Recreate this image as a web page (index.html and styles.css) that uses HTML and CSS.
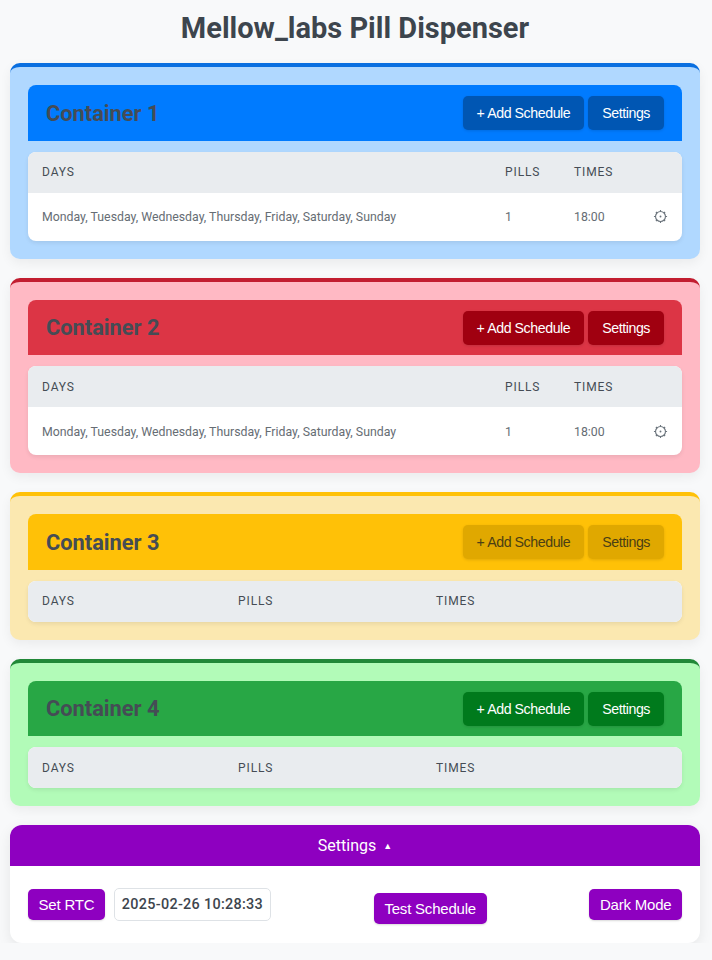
FILE: index.html
```html
<!DOCTYPE html>
<html lang="en">
<head>
<meta charset="utf-8">
<title>Mellow_labs Pill Dispenser</title>
<link rel="stylesheet" href="styles.css">
</head>
<body>
<h1 class="title">Mellow_labs Pill Dispenser</h1>

<section class="container c-blue">
  <div class="head">
    <h2 class="head-title">Container 1</h2>
    <div class="head-actions"><button class="btn">+ Add Schedule</button><button class="btn">Settings</button></div>
  </div>
  <table class="sched">
    <colgroup><col class="w-463"><col class="w-69"><col class="w-74"><col class="w-48"></colgroup>
    <thead><tr><th>Days</th><th>Pills</th><th>Times</th><th></th></tr></thead>
    <tbody><tr><td>Monday, Tuesday, Wednesday, Thursday, Friday, Saturday, Sunday</td><td>1</td><td>18:00</td><td class="act"><svg class="gear" viewBox="0 0 16 16"><circle cx="8" cy="8" r="5.3"/><circle class="dot" cx="8" cy="8" r="1"/><path d="M8 1v1.7M8 13.3V15M1 8h1.7M13.3 8H15M3.05 3.05l1.2 1.2M11.75 11.75l1.2 1.2M3.05 12.95l1.2-1.2M11.75 4.25l1.2-1.2"/></svg></td></tr></tbody>
  </table>
</section>

<section class="container c-red">
  <div class="head">
    <h2 class="head-title">Container 2</h2>
    <div class="head-actions"><button class="btn">+ Add Schedule</button><button class="btn">Settings</button></div>
  </div>
  <table class="sched">
    <colgroup><col class="w-463"><col class="w-69"><col class="w-74"><col class="w-48"></colgroup>
    <thead><tr><th>Days</th><th>Pills</th><th>Times</th><th></th></tr></thead>
    <tbody><tr><td>Monday, Tuesday, Wednesday, Thursday, Friday, Saturday, Sunday</td><td>1</td><td>18:00</td><td class="act"><svg class="gear" viewBox="0 0 16 16"><circle cx="8" cy="8" r="5.3"/><circle class="dot" cx="8" cy="8" r="1"/><path d="M8 1v1.7M8 13.3V15M1 8h1.7M13.3 8H15M3.05 3.05l1.2 1.2M11.75 11.75l1.2 1.2M3.05 12.95l1.2-1.2M11.75 4.25l1.2-1.2"/></svg></td></tr></tbody>
  </table>
</section>

<section class="container c-yellow">
  <div class="head">
    <h2 class="head-title">Container 3</h2>
    <div class="head-actions"><button class="btn">+ Add Schedule</button><button class="btn">Settings</button></div>
  </div>
  <table class="sched">
    <colgroup><col class="w-196"><col class="w-198"><col class="w-130"><col class="w-130"></colgroup>
    <thead><tr><th>Days</th><th>Pills</th><th>Times</th><th></th></tr></thead>
  </table>
</section>

<section class="container c-green">
  <div class="head">
    <h2 class="head-title">Container 4</h2>
    <div class="head-actions"><button class="btn">+ Add Schedule</button><button class="btn">Settings</button></div>
  </div>
  <table class="sched">
    <colgroup><col class="w-196"><col class="w-198"><col class="w-130"><col class="w-130"></colgroup>
    <thead><tr><th>Days</th><th>Pills</th><th>Times</th><th></th></tr></thead>
  </table>
</section>

<section class="settings">
  <div class="settings-head">Settings <span class="caret">▲</span></div>
  <div class="settings-body">
    <div class="rtc"><button class="pbtn">Set RTC</button><span class="clock">2025-02-26 10:28:33</span></div>
    <button class="pbtn test">Test Schedule</button>
    <button class="pbtn dark">Dark Mode</button>
  </div>
</section>
</body>
</html>
```

FILE: styles.css
```css
* { box-sizing: border-box; }
html, body { margin: 0; }
body {
  background: #f8f9fa;
  padding: 0 12px 0 10px;
  font-family: Roboto, "Liberation Sans", sans-serif;
  color: #343a40;
}
.title {
  margin: 0;
  height: 63.3px;
  padding-top: 10px;
  text-align: center;
  font-size: 29px;
  line-height: 36px;
  font-weight: 700;
  color: #3d454d;
}
.container {
  border-top: 4px solid var(--main);
  border-radius: 10px;
  background: var(--tint);
  padding: 18px;
  margin-bottom: 19px;
  box-shadow: 0 4px 12px rgba(0,0,0,.06);
}
.c-blue { --main: #007bff; --tint: #b0d8ff; --btn: #0056b3; --btn-text: #fff; border-top-color: #0a6fe0; }
.c-red { --main: #dc3545; --tint: #ffb9c4; --btn: #a00010; --btn-text: #fff; border-top-color: #c21d30; }
.c-yellow { --main: #ffc107; --tint: #fbe8b0; --btn: #e0a800; --btn-text: #4b3f14; }
.c-green { --main: #28a745; --tint: #b2fbb8; --btn: #007a1c; --btn-text: #fff; border-top-color: #218838; }
.head {
  display: flex;
  align-items: center;
  justify-content: space-between;
  height: 55.5px;
  padding: 0 18px;
  background: var(--main);
  border-radius: 8px 8px 0 0;
  margin-bottom: 11px;
}
.head-title {
  margin: 0;
  font-size: 21.8px;
  font-weight: 700;
  color: #454c55;
}
.head-actions { display: flex; gap: 4px; }
.btn, .pbtn {
  font-family: "Liberation Sans", Arial, sans-serif;
  border: 0;
  border-radius: 5px;
  cursor: pointer;
}
.btn {
  width: auto;
  height: 34px;
  padding: 0 14px;
  font-size: 14.2px;
  letter-spacing: -.44px;
  color: var(--btn-text);
  background: var(--btn);
  box-shadow: 0 1px 3px rgba(0,0,0,.12);
}
.sched {
  width: 100%;
  table-layout: fixed;
  border-collapse: separate;
  border-spacing: 0;
  background: #fff;
  border-radius: 8px;
  overflow: hidden;
  box-shadow: 0 2px 4px rgba(0,0,0,.08);
}
.w-463 { width: 463px; }
.w-69 { width: 69px; }
.w-74 { width: 74px; }
.w-48 { width: 48px; }
.w-196 { width: 196px; }
.w-198 { width: 198px; }
.w-130 { width: 130px; }
.sched th {
  height: 41px;
  padding: 0 14px;
  text-align: left;
  background: #e9ecef;
  font-size: 12px;
  font-weight: 400;
  letter-spacing: .9px;
  text-transform: uppercase;
  color: #454c55;
}
.sched td {
  height: 48px;
  padding: .5px 14px 0;
  font-size: 12.32px;
  color: #666d74;
}
.sched td.act { padding-top: 0; padding-bottom: .5px; }
.gear {
  display: block;
  margin-left: auto;
  width: 15px;
  height: 15px;
  fill: none;
  stroke: #6c757d;
  stroke-width: 1.2;
}
.gear .dot { fill: #6c757d; stroke: none; }
.settings {
  background: #fff;
  border-radius: 12px;
  overflow: hidden;
  box-shadow: 0 4px 14px rgba(0,0,0,.08);
}
.settings-head {
  height: 41px;
  line-height: 41px;
  text-align: center;
  background: #8e00c0;
  color: #fff;
  font-size: 16px;
}
.caret { font-size: 9px; margin-left: 3px; vertical-align: 2px; }
.settings-body {
  display: flex;
  justify-content: space-between;
  align-items: flex-start;
  padding: 22px 18px;
  height: 77px;
}
.rtc { display: flex; align-items: center; gap: 9px; }
.pbtn {
  height: 31px;
  padding: 0 10.5px;
  background: #8e00c0;
  color: #fff;
  font-size: 15px;
  letter-spacing: -.2px;
  box-shadow: 0 1px 2px rgba(0,0,0,.15);
}
.test { margin-top: 5px; }
.dark { margin-top: 1px; }
.clock {
  display: block;
  border: 1px solid #dee2e6;
  border-radius: 5px;
  height: 33px;
  line-height: 31px;
  padding: 0 7px;
  font-size: 14.4px;
  font-weight: 500;
  letter-spacing: .3px;
  color: #3d454d;
  background: #fff;
}
```
